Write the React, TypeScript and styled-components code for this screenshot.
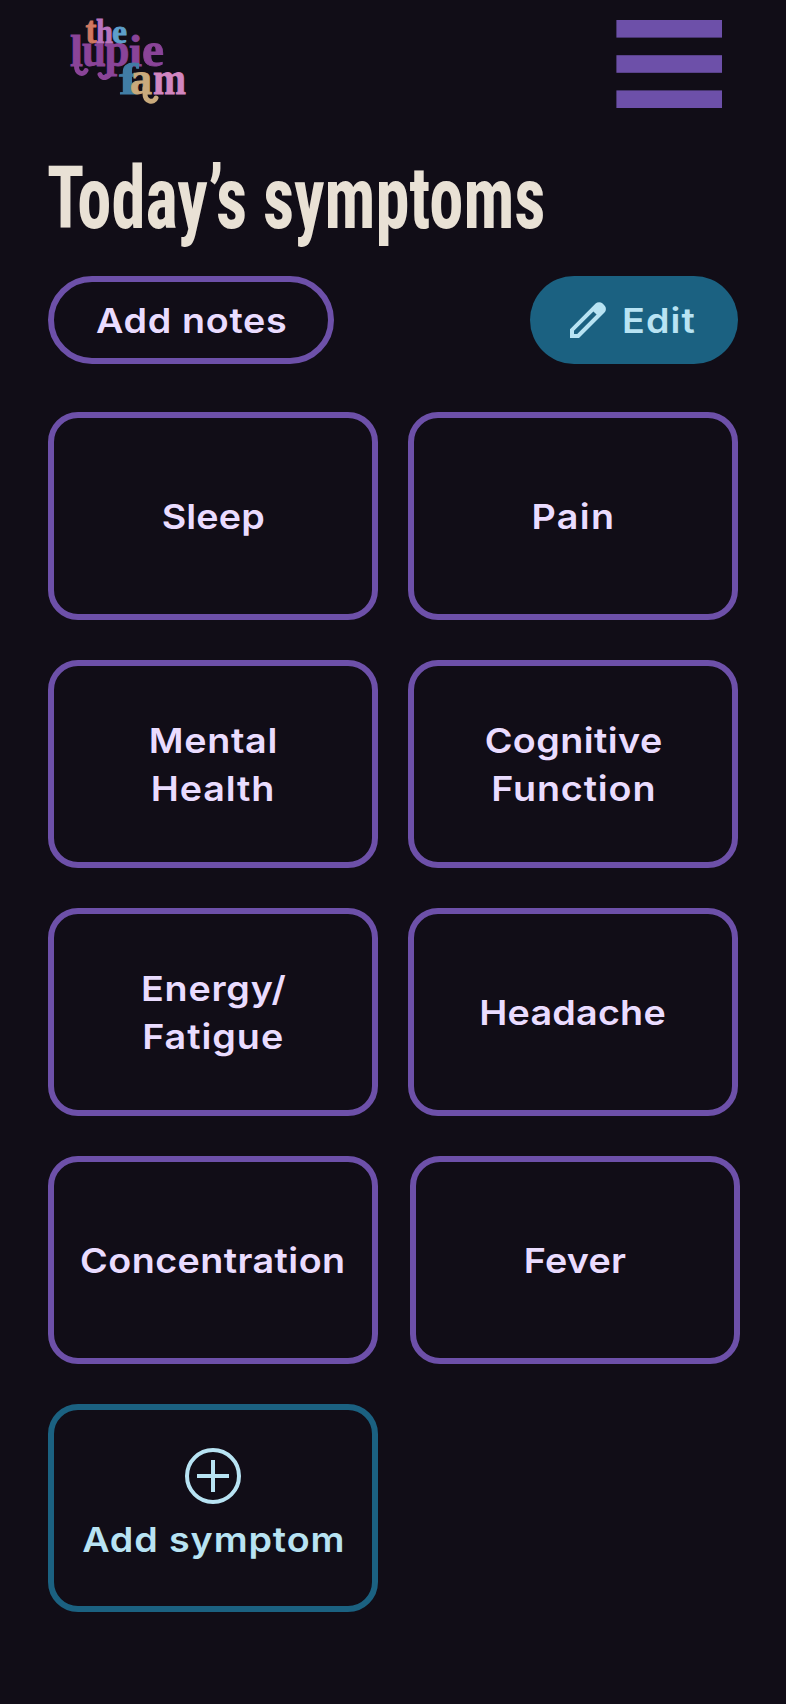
import React from "react";
import styled, { createGlobalStyle } from "styled-components";

interface Symptom {
  lines: { text: string; tracking: number }[];
  nudge?: number;
}

const colors = {
  background: "#110d17",
  purple: "#6d50a9",
  lavender: "#eadcff",
  blue: "#1b6181",
  ice: "#b8e3f3",
  cream: "#e9e1d5",
};

const GlobalStyle = createGlobalStyle`
  *, *::before, *::after {
    box-sizing: border-box;
  }

  body {
    margin: 0;
    background: ${colors.background};
  }

  button {
    margin: 0;
    padding: 0;
    background: none;
    border: none;
    color: inherit;
    font: inherit;
    cursor: pointer;
  }
`;

const Page = styled.main`
  width: 786px;
  min-height: 1704px;
  padding: 12px 48px 0;
  background: ${colors.background};
  color: ${colors.lavender};
  font-family: "Inter", "Liberation Sans", sans-serif;
`;

const Header = styled.header`
  display: flex;
  justify-content: space-between;
  height: 96px;
  padding: 0 16px 0 17px;
`;

const MenuButton = styled.button`
  height: 88px;
  margin-top: 8px;

  svg {
    display: block;
  }
`;

const Title = styled.h1`
  margin: 40px 0 0 -1px;
  height: 100px;
  color: ${colors.cream};
  font-family: "Roboto Condensed", "Roboto", sans-serif;
  font-size: 87px;
  font-weight: 700;
  line-height: 100px;
  white-space: nowrap;
  transform: scaleX(0.788);
  transform-origin: left;
`;

const Toolbar = styled.div`
  display: flex;
  justify-content: space-between;
  height: 88px;
  margin-top: 28px;
`;

const NotesButton = styled.button`
  display: flex;
  align-items: center;
  justify-content: center;
  width: 286px;
  border: 6px solid ${colors.purple};
  border-radius: 44px;
`;

const EditButton = styled.button`
  display: flex;
  align-items: center;
  gap: 16px;
  width: 208px;
  padding-left: 40px;
  border-radius: 44px;
  background: ${colors.blue};
  color: ${colors.ice};
`;

const Label = styled.span<{ $tracking: number; $origin?: string }>`
  display: block;
  margin-right: ${(props) => -props.$tracking}px;
  font-size: 34.6px;
  font-weight: 600;
  letter-spacing: ${(props) => props.$tracking}px;
  line-height: 48px;
  white-space: nowrap;
  transform: scaleX(1.09);
  transform-origin: ${(props) => props.$origin || "center"};
`;

const Grid = styled.div`
  display: grid;
  grid-template-columns: 330px 330px;
  grid-auto-rows: 208px;
  gap: 40px 30px;
  margin-top: 48px;
`;

const Card = styled.button<{ $nudge?: number }>`
  display: flex;
  flex-direction: column;
  align-items: center;
  justify-content: center;
  width: 330px;
  margin-left: ${(props) => props.$nudge || 0}px;
  padding-bottom: 1px;
  border: 6px solid ${colors.purple};
  border-radius: 30px;
`;

const AddCard = styled(Card)`
  justify-content: flex-start;
  gap: 11px;
  padding-top: 38px;
  border-color: ${colors.blue};
  color: ${colors.ice};
`;

const symptoms: Symptom[] = [
  { lines: [{ text: "Sleep", tracking: 0.1 }] },
  { lines: [{ text: "Pain", tracking: 1.2 }] },
  {
    lines: [
      { text: "Mental", tracking: 0.65 },
      { text: "Health", tracking: 0.75 },
    ],
  },
  {
    lines: [
      { text: "Cognitive", tracking: 0.4 },
      { text: "Function", tracking: 0.8 },
    ],
  },
  {
    lines: [
      { text: "Energy/", tracking: 0.7 },
      { text: "Fatigue", tracking: 0.9 },
    ],
  },
  { lines: [{ text: "Headache", tracking: 0.2 }] },
  { lines: [{ text: "Concentration", tracking: 0.4 }] },
  { lines: [{ text: "Fever", tracking: 0.2 }], nudge: 2 },
];

const LogoText = styled.text`
  font-family: "Liberation Serif", serif;
  font-weight: 700;
  stroke-width: 0.9;
`;

const Logo: React.FC = () => (
  <svg width="130" height="96" viewBox="0 0 130 96">
    {/* lupie */}
    <g fill="#8a4498" stroke="#8a4498">
      <LogoText x="5" y="53.5" fontSize="44" textLength="13" lengthAdjust="spacingAndGlyphs">l</LogoText>
      <LogoText x="17" y="53.5" fontSize="49" textLength="24" lengthAdjust="spacingAndGlyphs">u</LogoText>
      <LogoText x="39.5" y="53.5" fontSize="49" textLength="25" lengthAdjust="spacingAndGlyphs">p</LogoText>
      <LogoText x="64" y="53.5" fontSize="44" textLength="13" lengthAdjust="spacingAndGlyphs">i</LogoText>
      <LogoText x="77" y="53.5" fontSize="49" textLength="22" lengthAdjust="spacingAndGlyphs">e</LogoText>
    </g>
    <g fill="none" stroke="#8a4498" strokeLinecap="round">
      <path d="M11.5 48v6c0 8 7 9.500 9.500 4.500" strokeWidth="5" />
      <path d="M46 53v4c0 9-9 11-11 5.500" strokeWidth="5" />
    </g>
    {/* the */}
    <LogoText x="20.500" y="31" fontSize="37" textLength="11" lengthAdjust="spacingAndGlyphs" fill="#d1785f" stroke="#d1785f">t</LogoText>
    <LogoText x="31" y="31" fontSize="34" textLength="17" lengthAdjust="spacingAndGlyphs" fill="#b873bd" stroke="#b873bd">h</LogoText>
    <LogoText x="47" y="31" fontSize="33" textLength="15" lengthAdjust="spacingAndGlyphs" fill="#5d9fca" stroke="#5d9fca">e</LogoText>
    {/* fam */}
    <LogoText x="54" y="82" fontSize="45" textLength="19" lengthAdjust="spacingAndGlyphs" fill="#417da5" stroke="#417da5">f</LogoText>
    <LogoText x="88" y="82" fontSize="47" textLength="33" lengthAdjust="spacingAndGlyphs" fill="#d286c0" stroke="#d286c0">m</LogoText>
    <LogoText x="65" y="82" fontSize="47" textLength="22" lengthAdjust="spacingAndGlyphs" fill="#c9aa7c" stroke="#c9aa7c">a</LogoText>
    <path d="M80 76v6c0 8 9 9.500 11 4" fill="none" stroke="#c9aa7c" strokeWidth="5" strokeLinecap="round" />
  </svg>
);

const MenuIcon: React.FC = () => (
  <svg width="106" height="88" viewBox="0 0 106 88" fill={colors.purple}>
    <rect x="0.4" width="105.6" height="17.6" />
    <rect x="0.4" y="35.2" width="105.6" height="17.6" />
    <rect x="0.4" y="70.4" width="105.6" height="17.6" />
  </svg>
);

const PencilIcon: React.FC = () => (
  <svg width="36" height="36" viewBox="0 0 36 36" fill={colors.ice}>
    <path
      fillRule="evenodd"
      d="M0 36V27.2L25.6 1.6a5 5 0 0 1 7 0L34.500 3.500a5 5 0 0 1 0 7L9 36zM4 32h3.200L26.600 12.600 23.400 9.400 4 28.800z"
    />
  </svg>
);

const PlusCircleIcon: React.FC = () => (
  <svg width="56" height="56" viewBox="0 0 56 56" fill="none" stroke={colors.ice} strokeWidth="4">
    <circle cx="28" cy="28" r="26" />
    <path d="M28 12v32M12 28h32" />
  </svg>
);

const App: React.FC = () => {
  return (
    <Page>
      <GlobalStyle />
      <Header>
        <Logo />
        <MenuButton aria-label="Menu">
          <MenuIcon />
        </MenuButton>
      </Header>
      <Title>Today’s symptoms</Title>
      <Toolbar>
        <NotesButton>
          <Label $tracking={0.6}>Add notes</Label>
        </NotesButton>
        <EditButton>
          <PencilIcon />
          <Label $tracking={1} $origin="left">
            Edit
          </Label>
        </EditButton>
      </Toolbar>
      <Grid>
        {symptoms.map((symptom) => (
          <Card key={symptom.lines[0].text} $nudge={symptom.nudge}>
            {symptom.lines.map((line) => (
              <Label key={line.text} $tracking={line.tracking}>
                {line.text}
              </Label>
            ))}
          </Card>
        ))}
        <AddCard>
          <PlusCircleIcon />
          <Label $tracking={0.8}>Add symptom</Label>
        </AddCard>
      </Grid>
    </Page>
  );
};

export default App;
